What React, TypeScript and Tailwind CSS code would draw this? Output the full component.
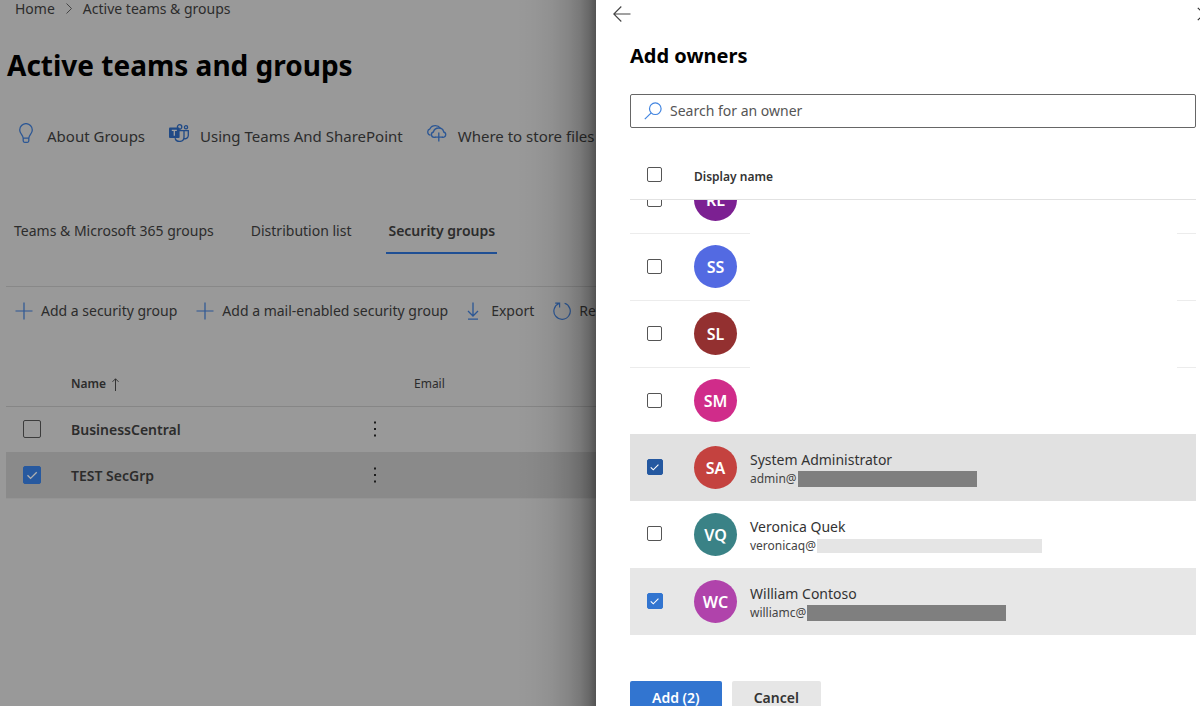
import React from "react";

type Member = {
  initials: string;
  color: string;
  name?: string;
  email?: string;
  mask?: string;
  row?: string;
  checked?: boolean;
  box?: string;
};

const members: Member[] = [
  { initials: "RL", color: "bg-[#7c2092]" },
  { initials: "SS", color: "bg-[#536ae2]" },
  { initials: "SL", color: "bg-[#933030]" },
  { initials: "SM", color: "bg-[#d02c8a]" },
  {
    initials: "SA",
    color: "bg-[#c4423f]",
    name: "System Administrator",
    email: "admin@",
    mask: "w-[179px] h-4 bg-[#7f7f7f]",
    row: "bg-[#e1e1e1]",
    checked: true,
    box: "checked:border-[#2458a0] checked:bg-[#2458a0]",
  },
  {
    initials: "VQ",
    color: "bg-[#3a8286]",
    name: "Veronica Quek",
    email: "veronicaq@",
    mask: "w-[225px] h-[14px] bg-[#e5e5e5]",
  },
  {
    initials: "WC",
    color: "bg-[#b043ab]",
    name: "William Contoso",
    email: "williamc@",
    mask: "w-[199px] h-4 bg-[#7f7f7f]",
    row: "bg-[#e7e7e7]",
    checked: true,
    box: "checked:border-[#3275d0] checked:bg-[#3275d0]",
  },
];

function Checkbox({
  label,
  checked,
  className = "",
  tick = "text-white",
}: {
  label: string;
  checked?: boolean;
  className?: string;
  tick?: string;
}) {
  return (
    <label className="relative flex w-fit shrink-0">
      <input
        type="checkbox"
        aria-label={label}
        defaultChecked={checked}
        className={"peer appearance-none rounded-xs border " + className}
      />
      <svg
        viewBox="0 0 16 16"
        className={"pointer-events-none absolute inset-0 hidden h-full w-full peer-checked:block " + tick}
        fill="none"
        stroke="currentColor"
        strokeWidth="1.2"
      >
        <path d="M4 8.3l2.7 2.7L12.2 5.5" />
      </svg>
    </label>
  );
}

function PlusIcon() {
  return (
    <svg width="18" height="18" viewBox="0 0 18 18" fill="none" stroke="#2c5795" strokeWidth="1.2" className="shrink-0">
      <path d="M9 .5v17M.5 9h17" />
    </svg>
  );
}

function BulbIcon() {
  return (
    <svg width="14" height="20" viewBox="0 0 14 20" fill="none" stroke="#2c5795" strokeWidth="1.3" className="mb-[6px] shrink-0">
      <path d="M4.200 15.200c0-3-3.500-4.300-3.500-8.300a6.300 6.300 0 0 1 12.600 0c0 4-3.500 5.300-3.500 8.300zM4.200 15.200v2.600c0 .9.5 1.500 1.400 1.500h2.800c.9 0 1.400-.6 1.400-1.500v-2.600" />
    </svg>
  );
}

function TeamsIcon() {
  return (
    <svg width="20" height="18" viewBox="0 0 20 18" fill="none" stroke="#204a86" strokeWidth="1.3" className="mb-[6px] shrink-0">
      <circle cx="10.600" cy="2.900" r="2.200" />
      <circle cx="17" cy="3.300" r="1.600" />
      <path d="M10 6.600h5v6.200a4.600 4.600 0 0 1-9 1.400M15 6.600h4.300v4.900a3.300 3.300 0 0 1-4.300 3.100" />
      <rect x="0" y="3.500" width="10.600" height="10.400" rx="1" fill="#204a86" stroke="none" />
      <path d="M2.800 6.300h5M5.300 6.300v5.400" stroke="#a3a3a3" strokeWidth="1.300" />
    </svg>
  );
}

function CloudIcon() {
  return (
    <svg width="20" height="17" viewBox="0 0 20 17" fill="none" stroke="#2c5795" strokeWidth="1.3" className="mb-[6px] shrink-0">
      <path d="M3.600 10.200A3.300 3.300 0 0 1 3 3.800C4 1.700 6 .7 8.400.7c2.200 0 3.900.9 4.800 2.300" />
      <path d="M8.700 12.300H7a2.700 2.700 0 0 1-.6-5.300C7 4.500 9.200 3 11.700 3c2.600 0 4.600 1.700 5 4a2.700 2.700 0 0 1-.4 5.300h-1.500" />
      <path d="M11.800 7.500v9M7.600 12.200h8.400" />
    </svg>
  );
}

function DownloadIcon() {
  return (
    <svg width="12" height="18" viewBox="0 0 12 18" fill="none" stroke="#2c5795" strokeWidth="1.3" className="shrink-0">
      <path d="M6 .5v13.200M1 9l5 5 5-5M1 17.200h10" />
    </svg>
  );
}

function RefreshIcon() {
  return (
    <svg width="18" height="18" viewBox="0 0 18 18" fill="none" stroke="#2c5795" strokeWidth="1.2" className="shrink-0">
      <path d="M11.600 1.300A8.200 8.200 0 1 1 6 1.500M2.200 1.200H6.600V5.600" />
    </svg>
  );
}

function Header() {
  return (
    <>
      <nav aria-label="Breadcrumb" className="flex h-[17px] items-center gap-[11px] pl-[15px] text-sm text-[#2c2c2c]">
        <a href="#home">Home</a>
        <svg width="6" height="11" viewBox="0 0 6 11" fill="none" stroke="#444" strokeWidth="1">
          <path d="M.5.5l5 5-5 5" />
        </svg>
        <a href="#groups">Active teams &amp; groups</a>
      </nav>
      <h1 className="mt-7 pl-[7px] text-[28px] leading-10 font-bold text-black">Active teams and groups</h1>
      <div className="mt-[41px] flex h-5 items-center gap-6 pl-[19px] text-[15px] text-[#2c2c2c]">
        <a href="#about" className="flex items-center gap-[14px]">
          <BulbIcon />
          About Groups
        </a>
        <a href="#using" className="flex items-center gap-[11px]">
          <TeamsIcon />
          Using Teams And SharePoint
        </a>
        <a href="#store" className="flex items-center gap-[11px]">
          <CloudIcon />
          Where to store files
        </a>
      </div>
    </>
  );
}

function Groups() {
  const rows = [
    { name: "BusinessCentral", checked: false },
    { name: "TEST SecGrp", checked: true },
  ];
  return (
    <>
      <div role="tablist" className="mt-[63px] flex h-[45px] gap-[33px] pl-3 text-sm text-[#2c2c2c]">
        <button role="tab" aria-selected="false" className="px-[2px] pb-[2px]">
          Teams &amp; Microsoft 365 groups
        </button>
        <button role="tab" aria-selected="false" className="px-[2px] pb-[2px]">
          Distribution list
        </button>
        <button role="tab" aria-selected="true" className="border-b-2 border-[#1f4f94] px-[2px] font-semibold">
          Security groups
        </button>
      </div>
      <div className="mt-8 ml-[6px] flex h-12 items-center gap-[19px] border-t border-[#888] pl-[9px] text-sm text-[#2c2c2c]">
        <button className="flex items-center gap-2">
          <PlusIcon />
          Add a security group
        </button>
        <button className="flex items-center gap-2">
          <PlusIcon />
          Add a mail-enabled security group
        </button>
        <button className="flex items-center gap-3">
          <DownloadIcon />
          Export
        </button>
        <button className="flex items-center gap-2">
          <RefreshIcon />
          Refresh
        </button>
      </div>
      <div className="mt-7 pl-[6px]">
        <table className="w-full table-fixed border-collapse text-left text-sm text-[#2c2c2c]">
          <colgroup>
            <col className="w-[65px]" />
            <col className="w-[297px]" />
            <col className="w-[46px]" />
            <col />
          </colgroup>
          <thead>
            <tr className="h-11 border-b border-[#868686] text-xs">
              <th aria-label="Select" />
              <th className="pt-px font-semibold">
                <span className="flex items-center gap-[6px]">
                  Name
                  <svg width="7" height="13" viewBox="0 0 7 13" fill="none" stroke="#333" strokeWidth="1">
                    <path d="M3.500 13V.8M.5 3.800l3-3 3 3" />
                  </svg>
                </span>
              </th>
              <th aria-label="Actions" />
              <th className="pt-px font-normal">Email</th>
            </tr>
          </thead>
          <tbody>
            {rows.map((r) => (
              <tr key={r.name} className={"h-[46px] " + (r.checked ? "border-b border-[#949494] bg-[#8a8a8a]" : "")}>
                <td className="pl-[17px]">
                  <Checkbox
                    label={"Select " + r.name}
                    checked={r.checked}
                    className="size-[18px] border-[#3c3c3c] checked:border-[#27599f] checked:bg-[#27599f]"
                    tick="text-[#b0b0b0]"
                  />
                </td>
                <th scope="row" className="pt-[2px] font-semibold">
                  {r.name}
                </th>
                <td>
                  <button aria-label={"More actions for " + r.name} className="flex">
                    <svg width="14" height="16" viewBox="0 0 14 16" fill="#1c1c1c">
                      <path d="M6 .5h2v2H6zM6 7h2v2H6zM6 13.500h2v2H6z" />
                    </svg>
                  </button>
                </td>
                <td />
              </tr>
            ))}
          </tbody>
        </table>
      </div>
    </>
  );
}

function MemberRow({ m }: { m: Member }) {
  const line = m.name ? "" : "border-t border-[#ececec]";
  return (
    <li className={"flex h-[67px] shrink-0 items-stretch " + (m.row ?? "")}>
      <div className={"flex w-[120px] shrink-0 items-center gap-8 pb-px pl-[17px] " + line}>
        <Checkbox
          label={"Select " + (m.name ?? m.initials)}
          checked={m.checked}
          className={"mb-px size-[15px] border-[#555] bg-white checked:-mr-px checked:mb-0 checked:size-4 " + (m.box ?? "")}
        />
        <span
          className={"flex size-[43px] shrink-0 items-center justify-center rounded-full pt-px text-base font-semibold text-white " + m.color}
        >
          {m.initials}
        </span>
      </div>
      {m.name ? (
        <div className="flex flex-col justify-center gap-px pt-[2px]">
          <span className="text-sm leading-5 text-[#333]">{m.name}</span>
          <span className="flex h-4 items-center gap-px text-xs text-[#444]">
            {m.email}
            <span className={"block " + m.mask} />
          </span>
        </div>
      ) : (
        <div className={"ml-auto w-[19px] " + line} />
      )}
    </li>
  );
}

function OwnersPanel() {
  return (
    <aside className="relative z-10 flex h-full w-[604px] shrink-0 flex-col bg-white">
      <div className="pointer-events-none absolute inset-y-0 right-full w-20 bg-[linear-gradient(to_left,rgba(0,0,0,0.46)_0,rgba(0,0,0,0.32)_7px,rgba(0,0,0,0.21)_16px,rgba(0,0,0,0.13)_28px,rgba(0,0,0,0.06)_44px,rgba(0,0,0,0.02)_62px,transparent_80px)]" />
      <div className="flex h-7 shrink-0 items-center justify-between pl-[17px]">
        <button aria-label="Back">
          <svg width="18" height="16" viewBox="0 0 18 16" fill="none" stroke="#444" strokeWidth="1.100">
            <path d="M17.500 8H.8M8.300.5L.8 8l7.500 7.500" />
          </svg>
        </button>
        <button aria-label="Close" className="w-[3px] overflow-hidden">
          <svg width="14" height="14" viewBox="0 0 14 14" fill="none" stroke="#333" strokeWidth="1.200" className="max-w-none">
            <path d="M.8.8l12.400 12.400M13.200.8L.8 13.200" />
          </svg>
        </button>
      </div>
      <div className="flex min-h-0 flex-1 flex-col pr-1 pl-[34px]">
        <h2 className="mt-3 text-xl leading-8 font-bold text-black">Add owners</h2>
        <label className="mt-[22px] flex h-[34px] shrink-0 items-center gap-2 rounded-xs border border-[#666] pl-[13px]">
          <svg width="18" height="18" viewBox="0 0 18 18" fill="none" stroke="#4285e0" strokeWidth="1.200" className="shrink-0">
            <circle cx="11.300" cy="6.700" r="5.800" />
            <path d="M7.200 10.800L.8 17.200" />
          </svg>
          <input
            type="search"
            aria-label="Search for an owner"
            placeholder="Search for an owner"
            className="w-full min-w-0 bg-transparent text-sm outline-none placeholder:text-[#555]"
          />
        </label>
        <div className="mt-6 flex h-12 shrink-0 items-center gap-8 border-b border-[#e2e2e2] pl-[17px] text-xs font-semibold text-[#333]">
          <Checkbox label="Select all" className="mb-[2px] size-[15px] border-[#555]" />
          <span className="pt-[2px]">Display name</span>
        </div>
        <ul className="flex min-h-0 flex-1 flex-col justify-end overflow-hidden">
          {members.map((m) => (
            <MemberRow key={m.initials} m={m} />
          ))}
        </ul>
      </div>
      <div className="flex h-[71px] shrink-0 items-start gap-[10px] overflow-hidden pt-[46px] pl-[34px] text-sm font-semibold">
        <button className="h-[34px] shrink-0 rounded-xs bg-[#3275d0] px-[22px] text-white">Add (2)</button>
        <button className="h-[34px] shrink-0 rounded-xs bg-[#e6e6e6] px-[22px] text-[#333]">Cancel</button>
      </div>
    </aside>
  );
}

export default function App() {
  return (
    <div className="flex h-screen overflow-hidden bg-[#999] font-['Noto_Sans',sans-serif]">
      <main className="min-w-0 flex-1 overflow-hidden whitespace-nowrap">
        <Header />
        <Groups />
      </main>
      <OwnersPanel />
    </div>
  );
}
